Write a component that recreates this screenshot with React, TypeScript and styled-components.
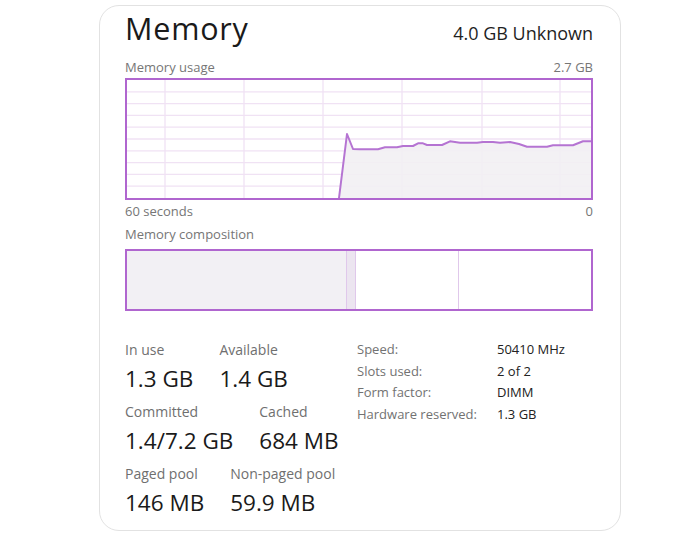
import React from 'react';
import styled, { createGlobalStyle } from 'styled-components';

const GlobalStyle = createGlobalStyle`
  html, body {
    margin: 0;
    padding: 0;
    background: #ffffff;
  }
  body {
    font-family: "Open Sans", "Noto Sans", sans-serif;
    color: #1a1a1a;
  }
`;

const Page = styled.div`
  width: 700px;
  height: 550px;
  box-sizing: border-box;
  padding: 5px 0 0 99px;
`;

const Card = styled.div`
  width: 522px;
  height: 526px;
  box-sizing: border-box;
  border: 1px solid #e2e2e2;
  border-radius: 20px;
  background: #ffffff;
  padding: 4px 27px 0 25px;
  display: flex;
  flex-direction: column;
`;

const Header = styled.div`
  display: flex;
  justify-content: space-between;
  align-items: baseline;
`;

const Title = styled.h1`
  margin: 0;
  font-size: 30.5px;
  line-height: 36px;
  font-weight: 400;
  letter-spacing: 0.8px;
  color: #1a1a1a;
`;

const Total = styled.span`
  font-size: 18px;
  color: #1f1f1f;
`;

const CaptionRow = styled.div<{ $gap: number }>`
  display: flex;
  justify-content: space-between;
  margin-top: ${(p) => p.$gap}px;
  font-size: 13px;
  line-height: 16px;
  color: #767676;
`;

const ChartFrame = styled.div`
  margin-top: 3px;
  height: 122px;
  box-sizing: border-box;
  border: 2px solid #b066cf;
  background: #ffffff;

  svg {
    display: block;
    width: 100%;
    height: 100%;
  }
`;

const Composition = styled.div`
  margin-top: 7px;
  height: 62px;
  box-sizing: border-box;
  border: 2px solid #b066cf;
  display: flex;
`;

const Segment = styled.div<{ $fill: string; $edge?: boolean }>`
  background: ${(p) => p.$fill};
  border-right: ${(p) => (p.$edge ? '1px solid #e0c8eb' : 'none')};
`;

const Stats = styled.div`
  margin-top: 30px;
  display: grid;
  grid-template-columns: 232px 1fr;
`;

const StatColumn = styled.div`
  display: flex;
  flex-direction: column;
  gap: 10px;
`;

const StatRow = styled.div`
  display: flex;
  gap: 26px;
`;

const Stat = styled.div`
  display: flex;
  flex-direction: column;
`;

const StatLabel = styled.span`
  font-size: 14px;
  line-height: 18px;
  color: #6f6f6f;
`;

const StatValue = styled.span`
  margin-top: 6px;
  font-size: 22.5px;
  line-height: 28px;
  color: #1a1a1a;
`;

const Specs = styled.div`
  margin-top: -2px;
  display: grid;
  grid-template-columns: 140px auto;
  align-content: start;
  font-size: 13px;
  line-height: 21.7px;
`;

const SpecLabel = styled.span`
  color: #727272;
`;

const SpecValue = styled.span`
  color: #222222;
`;

const W = 464;
const H = 118;
const PURPLE = '#b574d2';
const GRID = '#f0e2f4';

const usage: [number, number][] = [
  [212, 118], [220, 54], [226, 69], [233, 69.3], [251, 69.3], [258, 67.3],
  [270, 67.3], [276, 66], [286, 66], [291, 63.3], [296, 63.3], [300, 65],
  [315, 65], [323, 61.3], [333, 62.7], [350, 62.7], [356, 62], [366, 62],
  [373, 62.7], [383, 62], [392, 64], [400, 66.7], [420, 66.7], [426, 65.3],
  [446, 65.3], [456, 61.3], [464, 61.3],
];

const verticals = [38, 117, 196, 275, 355, 433];

const UsageChart = () => {
  const line = usage.map(([x, y], i) => `${i ? 'L' : 'M'}${x} ${y}`).join(' ');
  const area = `${line} L${W} ${H} L212 ${H} Z`;
  return (
    <svg viewBox={`0 0 ${W} ${H}`} preserveAspectRatio="none">
      {Array.from({ length: 9 }, (_, i) => (
        <line key={`h${i}`} x1={0} x2={W} y1={(H * (i + 1)) / 10} y2={(H * (i + 1)) / 10} stroke={GRID} strokeWidth={1.3} />
      ))}
      {verticals.map((x) => (
        <line key={`v${x}`} x1={x} x2={x} y1={0} y2={H} stroke={GRID} strokeWidth={1.3} />
      ))}
      <path d={area} fill="#f2f0f3" fillOpacity={0.9} />
      <path d={line} fill="none" stroke={PURPLE} strokeWidth={2} strokeLinejoin="round" />
    </svg>
  );
};

const leftStats = [
  [['In use', '1.3 GB'], ['Available', '1.4 GB']],
  [['Committed', '1.4/7.2 GB'], ['Cached', '684 MB']],
  [['Paged pool', '146 MB'], ['Non-paged pool', '59.9 MB']],
];

const specs = [
  ['Speed:', '50410 MHz'],
  ['Slots used:', '2 of 2'],
  ['Form factor:', 'DIMM'],
  ['Hardware reserved:', '1.3 GB'],
];

export default function App() {
  return (
    <>
      <GlobalStyle />
      <Page>
        <Card>
          <Header>
            <Title>Memory</Title>
            <Total>4.0 GB Unknown</Total>
          </Header>

          <CaptionRow $gap={13}>
            <span>Memory usage</span>
            <span>2.7 GB</span>
          </CaptionRow>
          <ChartFrame>
            <UsageChart />
          </ChartFrame>
          <CaptionRow $gap={3}>
            <span>60 seconds</span>
            <span>0</span>
          </CaptionRow>

          <CaptionRow $gap={7}>
            <span>Memory composition</span>
          </CaptionRow>
          <Composition>
            <Segment $fill="#f2f0f4" style={{ width: 219 }} />
            <Segment $fill="#ece5f0" style={{ width: 8, borderLeft: '1px solid #e0c8eb' }} $edge />
            <Segment $fill="#ffffff" style={{ width: 102 }} $edge />
            <Segment $fill="#ffffff" style={{ flex: 1 }} />
          </Composition>

          <Stats>
            <StatColumn>
              {leftStats.map((row, i) => (
                <StatRow key={i}>
                  {row.map(([label, value]) => (
                    <Stat key={label}>
                      <StatLabel>{label}</StatLabel>
                      <StatValue>{value}</StatValue>
                    </Stat>
                  ))}
                </StatRow>
              ))}
            </StatColumn>
            <Specs>
              {specs.map(([label, value]) => (
                <React.Fragment key={label}>
                  <SpecLabel>{label}</SpecLabel>
                  <SpecValue>{value}</SpecValue>
                </React.Fragment>
              ))}
            </Specs>
          </Stats>
        </Card>
      </Page>
    </>
  );
}
